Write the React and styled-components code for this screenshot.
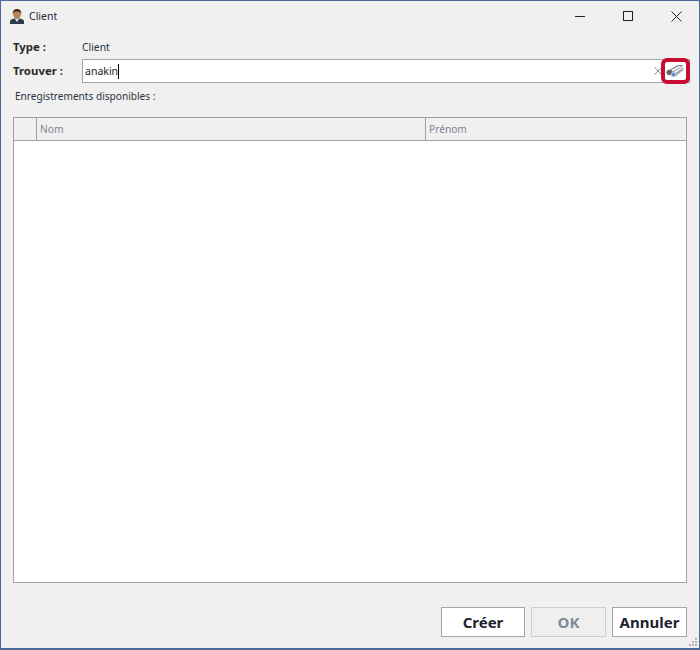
import React from 'react';
import styled, { createGlobalStyle } from 'styled-components';

const Global = createGlobalStyle`
    html,body{
        margin:0;
        padding:0;
        background:#f0f0f0;
    }
`

const Win = styled.div`
    box-sizing: border-box;
    width: 700px;
    height: 650px;
    position: relative;
    display: flex;
    flex-direction: column;
    background: #f0f0f0;
    border: 1px solid #4a6a9c;
    border-bottom-width: 2px;
    font-family: "Noto Sans", "Open Sans", sans-serif;
    font-size: 11px;
    color: #222;
`

const TitleBar = styled.div`
    height: 30px;
    flex: none;
    display: flex;
    align-items: center;
    padding-left: 8px;
`

const TitleText = styled.div`
    flex: 1;
    margin-left: 4px;
    font-size: 10.5px;
    line-height: 30px;
    height: 30px;
    color: #1e2a3a;
`

const WinButton = styled.div`
    box-sizing: border-box;
    width: 48px;
    height: 30px;
    padding-left: 2px;
    display: flex;
    align-items: center;
    justify-content: center;
`

const Form = styled.div`
    display: flex;
    flex-direction: column;
    padding: 4px 12px 0;
    flex: 1;
    min-height: 0;
`

const Row = styled.div`
    display: flex;
    align-items: center;
    height: ${p => p.$h}px;
`

const Label = styled.div`
    width: 69px;
    padding-bottom: 2px;
    font-weight: 700;
    font-size: 11.4px;
    color: #2a2a2a;
`

const Value = styled.div`
    color: #2a3342;
    font-size: 10.3px;
`

const SearchBox = styled.div`
    flex: 1;
    height: 24px;
    box-sizing: border-box;
    background: #fff;
    border: 1px solid #a6a6a6;
    display: flex;
    align-items: center;
    padding-left: 2px;
    position: relative;
    margin-right: -3px;
`

const SearchText = styled.span`
    font-size: 10.5px;
    color: #222;
    border-right: 1px solid #000;
    line-height: 15px;
`

const ClearX = styled.span`
    position: absolute;
    right: 27px;
    top: 7px;
    display: flex;
`

const Highlight = styled.div`
    position: absolute;
    right: 9px;
    top: 57px;
    width: 29px;
    height: 26px;
    box-sizing: border-box;
    border: 4px solid #c80d32;
    border-radius: 6px;
    background: #fff;
    display: flex;
    align-items: center;
    justify-content: center;
`

const Caption = styled.div`
    margin: 5px 0 13px 2px;
    height: 16px;
    line-height: 16px;
    font-size: 10.1px;
    color: #2a3342;
`

const Table = styled.div`
    flex: 1;
    min-height: 0;
    box-sizing: border-box;
    background: #fff;
    border: 1px solid #a0a0a0;
    display: flex;
    flex-direction: column;
`

const HeaderRow = styled.div`
    flex: none;
    box-sizing: border-box;
    height: 23px;
    display: grid;
    grid-template-columns: 22px 389px 1fr;
    background: #f0f0f0;
    border-bottom: 1px solid #a0a0a0;
`

const HeaderCell = styled.div`
    display: flex;
    align-items: center;
    padding-left: 3px;
    font-size: 10.2px;
    color: #7d8494;
    border-left: ${p => (p.$first ? 'none' : '1px solid #a0a0a0')};
`

const Footer = styled.div`
    flex: none;
    height: 65px;
    display: flex;
    justify-content: flex-end;
    align-items: flex-start;
    gap: 6px;
    padding: 24px 12px 0 0;
    box-sizing: border-box;
`

const Btn = styled.button`
    box-sizing: border-box;
    width: ${p => p.$w}px;
    height: 30px;
    padding: 0;
    background: ${p => (p.disabled ? '#efefef' : '#fff')};
    border: 1px solid ${p => (p.disabled ? '#cfcfcf' : '#a6a6a6')};
    font-family: "Noto Sans", sans-serif;
    font-weight: 700;
    font-size: 15px;
    color: ${p => (p.disabled ? '#7e8a96' : '#1c2230')};
`

const Grip = styled.svg`
    position: absolute;
    right: 1px;
    bottom: 1px;
`

const UserIcon = () => (
    <svg width="16" height="16" viewBox="0 0 16 16">
        <path d="M1 16v-2.500C1 11.500 3 11 5.500 10.500h5C13 11 15 11.500 15 13.500V16z" fill="#2f3a48" />
        <path d="M6 11h4l-2 3z" fill="#e8e8e8" />
        <ellipse cx="8" cy="6" rx="4" ry="4.600" fill="#b9855a" />
        <path d="M3.800 6C3.400 2 6 1 8 1s4.600 1 4.200 5C11.500 4 10 3.600 8 3.600S4.500 4 3.800 6z" fill="#4a2d18" />
    </svg>
)

const Binoculars = () => (
    <svg width="19" height="14" viewBox="0 0 19 14">
        <path d="M1 7 12 1l5 0-1 2L6 9z" fill="#85898c" />
        <path d="M5 12 16 4l2 .5-1 2L9 13z" fill="#a9adb1" />
        <path d="M4 6.500 13 2l3 .5L6 8z" fill="#f0f1f2" />
        <ellipse cx="3.500" cy="8.500" rx="3" ry="2.800" fill="#63686b" />
        <ellipse cx="7.500" cy="10.500" rx="2.600" ry="2.600" fill="#a9c6e6" />
        <ellipse cx="7.500" cy="10.500" rx="1.200" ry="1.200" fill="#3a6aa6" />
    </svg>
)

const App = () => {
    return (
        <Win>
            <Global />
            <TitleBar>
                <UserIcon />
                <TitleText>Client</TitleText>
                <WinButton>
                    <svg width="10" height="10"><path d="M0 5.500h10" stroke="#222" /></svg>
                </WinButton>
                <WinButton>
                    <svg width="10" height="10"><rect x=".5" y=".5" width="9" height="9" fill="none" stroke="#222" /></svg>
                </WinButton>
                <WinButton>
                    <svg width="11" height="11"><path d="M.5.5l10 10M10.500.5l-10 10" stroke="#222" /></svg>
                </WinButton>
            </TitleBar>
            <Form>
                <Row $h={24}>
                    <Label>Type :</Label>
                    <Value>Client</Value>
                </Row>
                <Row $h={24}>
                    <Label>Trouver :</Label>
                    <SearchBox>
                        <SearchText>anakin</SearchText>
                        <ClearX>
                            <svg width="8" height="8"><path d="M.5.5l7 7M7.500.5l-7 7" stroke="#888" /></svg>
                        </ClearX>
                    </SearchBox>
                </Row>
                <Caption>Enregistrements disponibles :</Caption>
                <Table>
                    <HeaderRow>
                        <HeaderCell $first />
                        <HeaderCell>Nom</HeaderCell>
                        <HeaderCell>Prénom</HeaderCell>
                    </HeaderRow>
                </Table>
            </Form>
            <Footer>
                <Btn $w={84}>Créer</Btn>
                <Btn $w={75} disabled>OK</Btn>
                <Btn $w={75}>Annuler</Btn>
            </Footer>
            <Highlight><Binoculars /></Highlight>
            <Grip width="10" height="10" fill="#b5b5b5">
                <rect x="7" y="1" width="2" height="2" />
                <rect x="4" y="4" width="2" height="2" />
                <rect x="7" y="4" width="2" height="2" />
                <rect x="1" y="7" width="2" height="2" />
                <rect x="4" y="7" width="2" height="2" />
                <rect x="7" y="7" width="2" height="2" />
            </Grip>
        </Win>
    );
}

export default App;
